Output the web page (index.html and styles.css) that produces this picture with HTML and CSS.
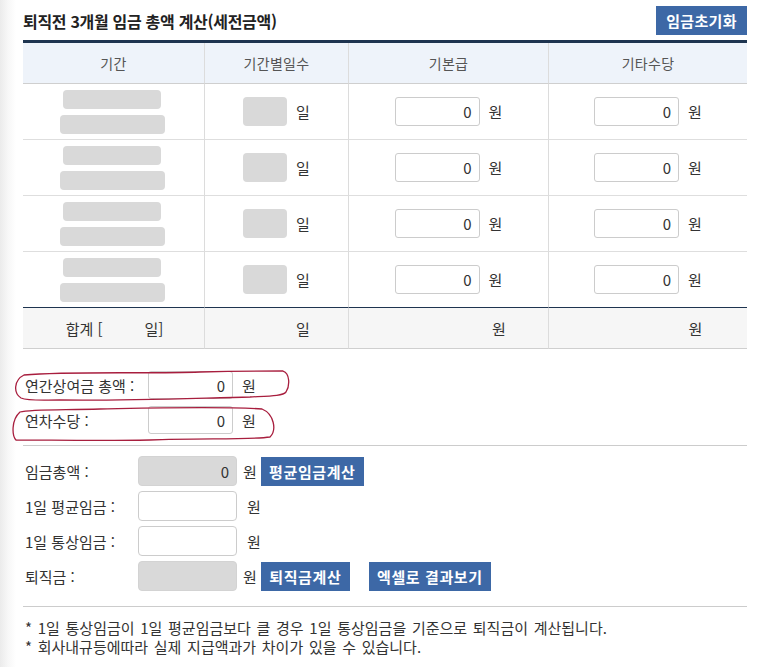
FILE: index.html
```html
<!DOCTYPE html>
<html lang="ko">
<head>
<meta charset="utf-8">
<title>퇴직금 계산</title>
<link rel="stylesheet" href="styles.css">
</head>
<body>
<div class="page">
  <div class="head">
    <h2 class="title">퇴직전 3개월 임금 총액 계산(세전금액)</h2>
    <button class="btn btn-lg" type="button">임금초기화</button>
  </div>

  <div class="wage">
    <div class="th">기간</div>
    <div class="th">기간별일수</div>
    <div class="th">기본급</div>
    <div class="th">기타수당</div>

    <div class="td period"><span class="ph ph-a"></span><span class="ph ph-b"></span></div>
    <div class="td"><div class="cell"><span class="daybox"></span><span class="unit">일</span></div></div>
    <div class="td"><div class="cell"><input class="num" value="0"><span class="unit">원</span></div></div>
    <div class="td"><div class="cell"><input class="num" value="0"><span class="unit">원</span></div></div>

    <div class="td period"><span class="ph ph-a"></span><span class="ph ph-b"></span></div>
    <div class="td"><div class="cell"><span class="daybox"></span><span class="unit">일</span></div></div>
    <div class="td"><div class="cell"><input class="num" value="0"><span class="unit">원</span></div></div>
    <div class="td"><div class="cell"><input class="num" value="0"><span class="unit">원</span></div></div>

    <div class="td period"><span class="ph ph-a"></span><span class="ph ph-b"></span></div>
    <div class="td"><div class="cell"><span class="daybox"></span><span class="unit">일</span></div></div>
    <div class="td"><div class="cell"><input class="num" value="0"><span class="unit">원</span></div></div>
    <div class="td"><div class="cell"><input class="num" value="0"><span class="unit">원</span></div></div>

    <div class="td period last"><span class="ph ph-a"></span><span class="ph ph-b"></span></div>
    <div class="td last"><div class="cell"><span class="daybox"></span><span class="unit">일</span></div></div>
    <div class="td last"><div class="cell"><input class="num" value="0"><span class="unit">원</span></div></div>
    <div class="td last"><div class="cell"><input class="num" value="0"><span class="unit">원</span></div></div>

    <div class="tf"><div class="cell tight">합계 [<span class="sp sp-sum"></span>일]</div></div>
    <div class="tf"><div class="cell"><span class="sp sp-day"></span><span class="unit">일</span></div></div>
    <div class="tf"><div class="cell"><span class="sp sp-base"></span><span class="unit">원</span></div></div>
    <div class="tf"><div class="cell"><span class="sp sp-etc"></span><span class="unit">원</span></div></div>
  </div>

  <div class="bonus">
    <div class="frow">
      <span class="label lb-bonus">연간상여금 총액 :</span>
      <input class="num in-short" value="0"><span class="unit">원</span>
    </div>
    <div class="frow">
      <span class="label lb-bonus">연차수당 :</span>
      <input class="num in-short" value="0"><span class="unit">원</span>
    </div>
    <svg class="marks" width="300" height="80" viewBox="0 0 300 80" aria-hidden="true">
      <g transform="translate(-11,-367)" fill="none" stroke="#a81e3e" stroke-width="1.3" stroke-linejoin="round">
        <path d="M24 375 C70 371 150 374 200 372 C240 371 270 371 283 371 C290 373 290 386 286 392 C283 396 270 396 250 397 C200 398 120 401 60 400 C40 400 28 401 21 398 C13 393 14 380 24 375 Z"/>
        <path d="M20 412 C30 409 60 410 100 409 C150 408 220 406 262 409 C274 414 277 430 270 437 C250 440 200 438 150 440 C100 441 50 440 16 440 C12 436 11 420 20 412 Z"/>
      </g>
    </svg>
  </div>

  <hr class="rule rule-a">

  <div class="calc">
    <div class="frow frow-calc">
      <span class="label lb-calc">임금총액 :</span>
      <input class="num in-wide readonly" value="0" readonly><span class="unit unit-calc">원</span>
      <button class="btn btn-avg" type="button">평균임금계산</button>
    </div>
    <div class="frow frow-calc">
      <span class="label lb-calc">1일 평균임금 :</span>
      <input class="num in-wide" value=""><span class="unit unit-calc unit-far">원</span>
    </div>
    <div class="frow frow-calc">
      <span class="label lb-calc">1일 통상임금 :</span>
      <input class="num in-wide" value=""><span class="unit unit-calc unit-far">원</span>
    </div>
    <div class="frow frow-calc">
      <span class="label lb-calc">퇴직금 :</span>
      <input class="num in-wide readonly" value="" readonly><span class="unit unit-calc">원</span>
      <button class="btn btn-sev" type="button">퇴직금계산</button>
      <button class="btn btn-excel" type="button">엑셀로 결과보기</button>
    </div>
  </div>

  <hr class="rule rule-b">

  <div class="notes">
    <p>* 1일 통상임금이 1일 평균임금보다 클 경우 1일 통상임금을 기준으로 퇴직금이 계산됩니다.</p>
    <p>* 회사내규등에따라 실제 지급액과가 차이가 있을 수 있습니다.</p>
  </div>
</div>
</body>
</html>
```

FILE: styles.css
```css
* { box-sizing: border-box; }

html, body {
  margin: 0;
  padding: 0;
}

body {
  background: linear-gradient(to right, #ebebeb 0, #f7f7f7 8px, #ffffff 16px);
  font-family: "Noto Sans CJK KR", "Noto Sans", sans-serif;
  font-size: 14px;
  color: #333;
  min-height: 667px;
}

.page {
  width: 747px;
  padding: 6px 0 0 23px;
}

.head {
  display: flex;
  justify-content: space-between;
  align-items: center;
  height: 29px;
}

.title {
  margin: 0;
  font-size: 16px;
  font-weight: bold;
  color: #222;
  letter-spacing: -0.3px;
}

.btn {
  height: 29px;
  padding: 0;
  border: 0;
  border-radius: 0;
  background: #3d68a6;
  color: #fff;
  font-family: inherit;
  font-size: 15px;
  font-weight: bold;
  line-height: 29px;
  letter-spacing: 0.6px;
  text-align: center;
  white-space: nowrap;
}

.btn-lg {
  width: 91px;
  letter-spacing: 0.3px;
}

.btn-avg { width: 103px; }
.btn-sev { width: 89px; }

/* table */
.wage {
  margin-top: 5px;
  display: grid;
  grid-template-columns: 181px 144px 200px 199px;
  border-top: 3px solid #1e3450;
}

.th, .td, .tf {
  display: flex;
  align-items: center;
  justify-content: center;
}

.th:not(:nth-child(4n+1)),
.td:not(:nth-child(4n+1)),
.tf:not(:nth-child(4n+1)) {
  border-left: 1px solid #dcdcdc;
}

.th {
  height: 41px;
  background: #eef3fa;
  border-bottom: 1px solid #cfcfcf;
  color: #555;
  font-weight: normal;
  letter-spacing: 0.3px;
}

.td {
  height: 56px;
  border-bottom: 1px solid #dedede;
}

.td.last {
  border-bottom: 1px solid #1e3450;
}

.tf {
  height: 41px;
  background: #f6f6f6;
  border-bottom: 1px solid #cfcfcf;
}

.period {
  flex-direction: column;
  gap: 6px;
}

.ph {
  display: block;
  height: 19px;
  background: #d9d9d9;
  border-radius: 4px;
}

.ph-a { width: 98px; margin-left: -4px; }
.ph-b { width: 105px; margin-left: -2px; }

.cell {
  display: flex;
  align-items: center;
  justify-content: center;
  gap: 9px;
}

.cell.tight {
  gap: 0;
  margin-left: 2px;
  font-size: 15px;
}

.daybox {
  display: block;
  width: 44px;
  height: 29px;
  background: #d9d9d9;
  border-radius: 4px;
}

.num {
  width: 85px;
  height: 29px;
  padding: 0 7px;
  border: 1px solid #cccccc;
  border-radius: 3px;
  background: #fff;
  font-family: inherit;
  font-size: 15px;
  color: #333;
  text-align: right;
}

.unit {
  color: #333;
  font-size: 15px;
}

.sp { display: inline-block; }
.sp-sum { width: 42px; }
.sp-day { width: 44px; }
.sp-base { width: 92px; }
.sp-etc { width: 86px; }

/* bonus */
.bonus {
  position: relative;
  margin-top: 22px;
  display: flex;
  flex-direction: column;
  gap: 7px;
}

.frow {
  display: flex;
  align-items: center;
  height: 28px;
}

.label {
  padding-left: 2px;
  color: #333;
  font-size: 15px;
  white-space: nowrap;
}

.lb-bonus { width: 125px; }

.in-short {
  height: 28px;
}

.frow .unit { margin-left: 9px; }

.marks {
  position: absolute;
  left: -12px;
  top: -4px;
  overflow: visible;
  pointer-events: none;
}

.rule {
  border: 0;
  border-top: 1px solid #cccccc;
  margin: 0;
  width: 724px;
}

.rule-a { margin-top: 11px; }

/* calc */
.calc {
  margin-top: 10px;
  display: flex;
  flex-direction: column;
  gap: 5px;
}

.frow-calc { height: 30px; }

.lb-calc { width: 115px; }

.in-wide {
  width: 99px;
  height: 30px;
  border-radius: 4px;
}

.in-wide.readonly {
  background: #d9d9d9;
  border-color: #d3d3d3;
}

.frow .unit-calc {
  margin-left: 6px;
  margin-right: 4px;
}

.frow .unit-far {
  margin-left: 10px;
}

.btn-excel {
  width: 122px;
  margin-left: 19px;
}

.rule-b { margin-top: 15px; }

.notes {
  margin-top: 11px;
  padding-left: 2px;
}

.notes p {
  margin: 0;
  line-height: 19px;
  font-size: 15px;
  word-spacing: 1.5px;
  color: #333;
}
```
